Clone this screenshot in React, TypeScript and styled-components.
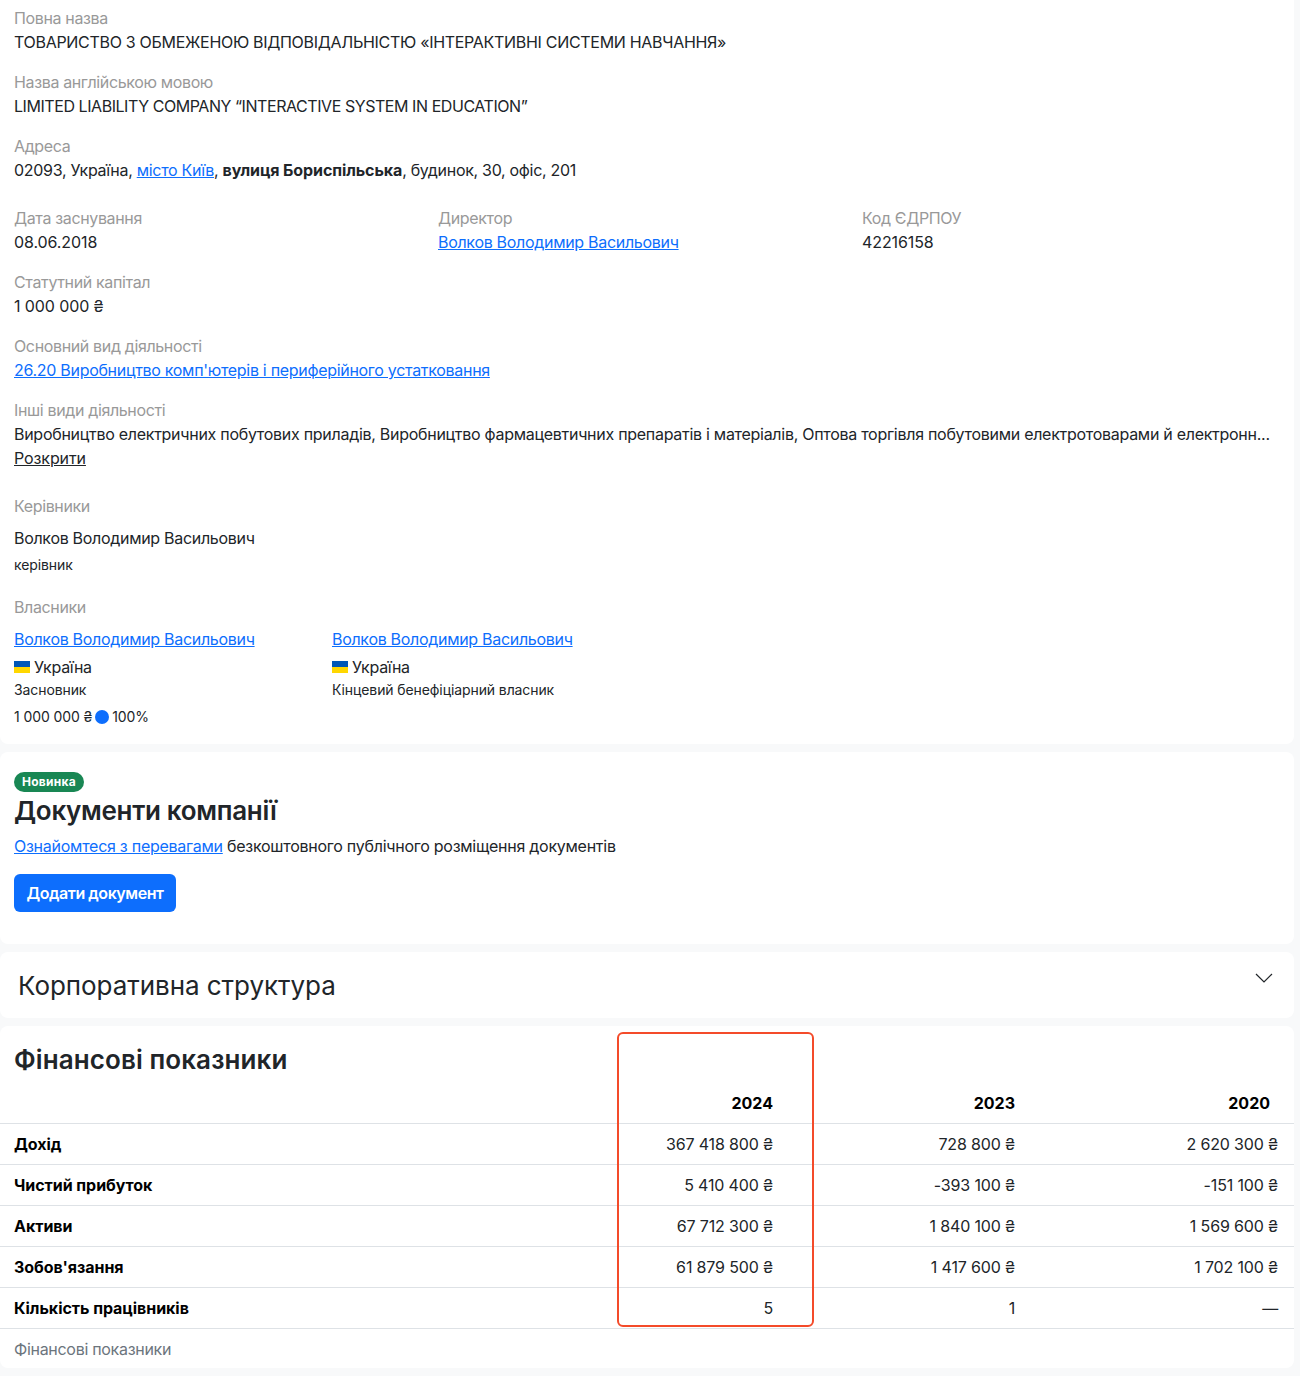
import React from 'react';
import styled, { createGlobalStyle } from 'styled-components';

const GlobalStyle = createGlobalStyle`
    html, body {
        margin: 0;
        padding: 0;
        background: #f8f9fa;
    }
    body {
        font-family: Inter, "Liberation Sans", sans-serif;
        font-size: 16px;
        line-height: 24px;
        letter-spacing: -0.3px;
        color: #212529;
    }
`;

const Page = styled.div`
    width: 1294px;
    display: flex;
    flex-direction: column;
    gap: 8px;
    padding-bottom: 8px;
`;

const Card = styled.section`
    background: #fff;
    border-radius: 0 0 8px 8px;
    & + & {
        border-radius: 8px;
    }
`;

const InfoCard = styled(Card)`
    padding: 6px 14px 17px;
    display: flex;
    flex-direction: column;
`;

const Field = styled.div<{ $after?: number }>`
    margin-bottom: ${p => p.$after ?? 16}px;
`;

const Label = styled.div`
    color: #999;
    letter-spacing: -0.36px;
`;

const Value = styled.div<{ $numeric?: boolean }>`
    color: #212529;
    ${p => p.$numeric && 'letter-spacing: -0.1px;'}
`;

const LatinValue = styled(Value)`
    letter-spacing: -0.44px;
`;

const Strong = styled.b`
    letter-spacing: -0.1px;
`;

const Clipped = styled(Value)`
    white-space: nowrap;
    letter-spacing: -0.28px;
`;

const Link = styled.a`
    color: #0d6efd;
    text-decoration: underline;
`;

const Toggle = styled.a`
    color: #212529;
    text-decoration: underline;
    letter-spacing: -0.1px;
`;

const ThreeCols = styled.div`
    display: grid;
    grid-template-columns: 424px 424px 1fr;
    margin-bottom: 16px;
`;

const PersonName = styled.div`
    margin-top: 8px;
`;

const Small = styled.div`
    font-size: 14px;
    line-height: 21px;
    letter-spacing: -0.1px;
    color: #212529;
`;

const Role = styled(Small)`
    margin-top: 4px;
    margin-bottom: 20px;
`;

const Owners = styled.div`
    display: flex;
    margin-top: 8px;
`;

const Owner = styled.div`
    width: 318px;
`;

const Country = styled.div`
    display: flex;
    align-items: center;
    gap: 4px;
    margin-top: 4px;
`;

const Flag = styled.span`
    width: 16px;
    height: 12px;
    background: linear-gradient(#0057b7 0 50%, #ffd700 50% 100%);
`;

const Share = styled(Small)`
    display: flex;
    align-items: center;
    gap: 3px;
    margin-top: 6px;
`;

const Dot = styled.span`
    width: 14px;
    height: 14px;
    border-radius: 50%;
    background: #0d6efd;
`;

const DocsCard = styled(Card)`
    padding: 20px 14px 32px;
`;

const Badge = styled.div`
    display: inline-block;
    vertical-align: top;
    height: 20px;
    padding: 0 8px;
    border-radius: 10px;
    background: #198754;
    color: #fff;
    font-size: 12px;
    line-height: 20px;
    font-weight: 700;
    letter-spacing: 0.25px;
`;

const DocsTitle = styled.h2`
    margin: 0;
    font-size: 26px;
    line-height: 30px;
    font-weight: 600;
    letter-spacing: -0.3px;
`;

const DocsText = styled.p`
    margin: 8px 0 16px;
    letter-spacing: -0.26px;
`;

const PrimaryButton = styled.button`
    display: block;
    height: 38px;
    width: 162px;
    padding: 0;
    border: 0;
    border-radius: 6px;
    background: #0d6efd;
    color: #fff;
    font: 600 16px/24px Inter, "Liberation Sans", sans-serif;
    letter-spacing: -0.45px;
`;

const Collapse = styled(Card)`
    height: 66px;
    padding: 0 20px 0 18px;
    display: flex;
    justify-content: space-between;
`;

const CollapseTitle = styled.h2`
    margin: 18px 0 0;
    font-size: 26px;
    line-height: 32px;
    font-weight: 400;
    letter-spacing: -0.05px;
`;

const Chevron = styled.svg`
    margin-top: 20px;
    width: 20px;
    height: 12px;
`;

const FinanceCard = styled(Card)`
    position: relative;
    height: 342px;
`;

const FinanceTitle = styled.h2`
    margin: 0;
    padding: 18px 14px 0;
    height: 48px;
    box-sizing: border-box;
    font-size: 26px;
    line-height: 32px;
    font-weight: 600;
    letter-spacing: 0.1px;
`;

const Highlight = styled.div`
    position: absolute;
    left: 617px;
    top: 6px;
    width: 197px;
    height: 295px;
    box-sizing: border-box;
    border: 2px solid #f44b2a;
    border-radius: 6px;
    pointer-events: none;
`;

const Table = styled.table`
    width: 1294px;
    table-layout: fixed;
    border-collapse: collapse;
    letter-spacing: -0.15px;
`;

const HeadCell = styled.th<{ $pad: number }>`
    height: 49px;
    padding: 16px ${p => p.$pad}px 8px 14px;
    box-sizing: border-box;
    text-align: right;
    vertical-align: bottom;
    font-weight: 700;
    letter-spacing: 0;
    color: #000;
    border-bottom: 1px solid #dee2e6;
`;

const RowTitle = styled.th`
    height: 41px;
    padding: 0 0 0 14px;
    box-sizing: border-box;
    text-align: left;
    font-weight: 700;
    letter-spacing: -0.05px;
    color: #000;
    border-bottom: 1px solid #dee2e6;
`;

const Cell = styled.td<{ $pad: number }>`
    height: 41px;
    padding: 0 ${p => p.$pad}px 0 0;
    box-sizing: border-box;
    text-align: right;
    border-bottom: 1px solid #dee2e6;
`;

const Footnote = styled.div`
    padding: 8px 14px;
    color: #6c757d;
`;

const padding = [40, 40, 16];

const rows = [
    ['Дохід', '367 418 800 ₴', '728 800 ₴', '2 620 300 ₴'],
    ['Чистий прибуток', '5 410 400 ₴', '-393 100 ₴', '-151 100 ₴'],
    ['Активи', '67 712 300 ₴', '1 840 100 ₴', '1 569 600 ₴'],
    ["Зобов'язання", '61 879 500 ₴', '1 417 600 ₴', '1 702 100 ₴'],
    ['Кількість працівників', '5', '1', '—']
];

const PERSON = 'Волков Володимир Васильович';

export default function App() {
    return (
        <Page>
            <GlobalStyle />
            <InfoCard>
                <Field>
                    <Label>Повна назва</Label>
                    <Value>ТОВАРИСТВО З ОБМЕЖЕНОЮ ВІДПОВІДАЛЬНІСТЮ «ІНТЕРАКТИВНІ СИСТЕМИ НАВЧАННЯ»</Value>
                </Field>
                <Field>
                    <Label>Назва англійською мовою</Label>
                    <LatinValue>LIMITED LIABILITY COMPANY “INTERACTIVE SYSTEM IN EDUCATION”</LatinValue>
                </Field>
                <Field $after={ 24 }>
                    <Label>Адреса</Label>
                    <Value>
                        02093, Україна, <Link>місто Київ</Link>, <Strong>вулиця Бориспільська</Strong>, будинок, 30, офіс, 201
                    </Value>
                </Field>
                <ThreeCols>
                    <div>
                        <Label>Дата заснування</Label>
                        <Value $numeric>08.06.2018</Value>
                    </div>
                    <div>
                        <Label>Директор</Label>
                        <Link>{ PERSON }</Link>
                    </div>
                    <div>
                        <Label>Код ЄДРПОУ</Label>
                        <Value $numeric>42216158</Value>
                    </div>
                </ThreeCols>
                <Field>
                    <Label>Статутний капітал</Label>
                    <Value $numeric>1 000 000 ₴</Value>
                </Field>
                <Field>
                    <Label>Основний вид діяльності</Label>
                    <Link>26.20 Виробництво комп'ютерів і периферійного устатковання</Link>
                </Field>
                <Field $after={ 24 }>
                    <Label>Інші види діяльності</Label>
                    <Clipped>
                        Виробництво електричних побутових приладів, Виробництво фармацевтичних препаратів і матеріалів, Оптова торгівля побутовими електротоварами й електронн...
                    </Clipped>
                    <Toggle>Розкрити</Toggle>
                </Field>
                <Label>Керівники</Label>
                <PersonName>{ PERSON }</PersonName>
                <Role>керівник</Role>
                <Label>Власники</Label>
                <Owners>
                    <Owner>
                        <Link>{ PERSON }</Link>
                        <Country><Flag />Україна</Country>
                        <Small>Засновник</Small>
                        <Share>1 000 000 ₴<Dot />100%</Share>
                    </Owner>
                    <Owner>
                        <Link>{ PERSON }</Link>
                        <Country><Flag />Україна</Country>
                        <Small>Кінцевий бенефіціарний власник</Small>
                    </Owner>
                </Owners>
            </InfoCard>

            <DocsCard>
                <Badge>Новинка</Badge>
                <DocsTitle>Документи компанії</DocsTitle>
                <DocsText>
                    <Link>Ознайомтеся з перевагами</Link> безкоштовного публічного розміщення документів
                </DocsText>
                <PrimaryButton>Додати документ</PrimaryButton>
            </DocsCard>

            <Collapse>
                <CollapseTitle>Корпоративна структура</CollapseTitle>
                <Chevron viewBox='0 0 20 12' fill='none'>
                    <path d='M2 2l8 8 8-8' stroke='#212529' strokeWidth='1.2' />
                </Chevron>
            </Collapse>

            <FinanceCard>
                <FinanceTitle>Фінансові показники</FinanceTitle>
                <Table>
                    <colgroup>
                        <col style={ { width: 618 } } />
                        <col style={ { width: 195 } } />
                        <col style={ { width: 242 } } />
                        <col />
                    </colgroup>
                    <thead>
                        <tr>
                            <HeadCell $pad={ 0 } />
                            <HeadCell $pad={ 40 }>2024</HeadCell>
                            <HeadCell $pad={ 40 }>2023</HeadCell>
                            <HeadCell $pad={ 24 }>2020</HeadCell>
                        </tr>
                    </thead>
                    <tbody>
                        {
                            rows.map(([title, ...values]) => (
                                <tr key={ title }>
                                    <RowTitle>{ title }</RowTitle>
                                    {
                                        values.map((value, index) => (
                                            <Cell key={ index } $pad={ padding[index] }>{ value }</Cell>
                                        ))
                                    }
                                </tr>
                            ))
                        }
                    </tbody>
                </Table>
                <Footnote>Фінансові показники</Footnote>
                <Highlight />
            </FinanceCard>
        </Page>
    );
}
